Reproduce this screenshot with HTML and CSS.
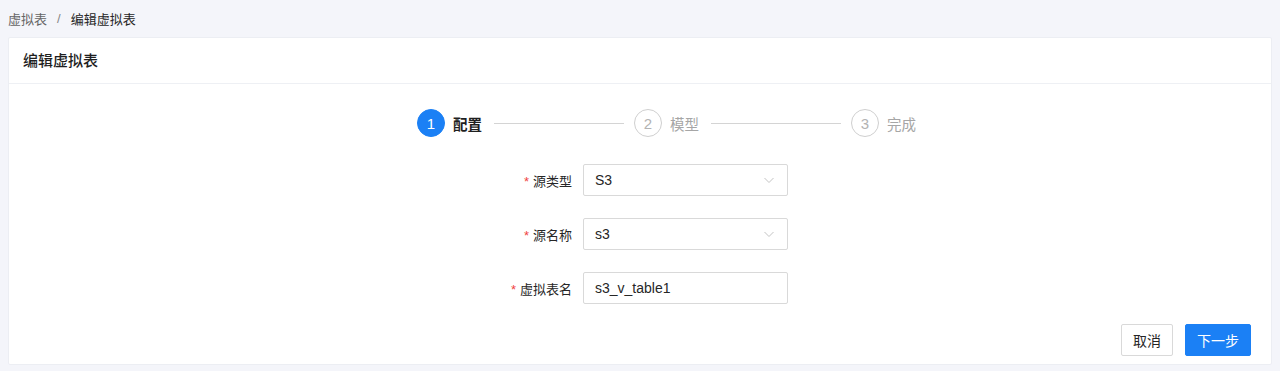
FILE: index.html
```html
<!DOCTYPE html>
<html lang="zh-CN">
<head>
  <meta charset="UTF-8">
  <title>编辑虚拟表</title>
  <link rel="stylesheet" href="styles.css">
</head>
<body>
  <div class="breadcrumb">
    <span class="crumb">虚拟表</span>
    <span class="sep">/</span>
    <span class="crumb current">编辑虚拟表</span>
  </div>

  <div class="card">
    <div class="card-header">编辑虚拟表</div>

    <div class="card-body">
      <div class="steps">
        <div class="step active">
          <span class="step-icon">1</span>
          <span class="step-title">配置</span>
          <span class="step-tail"></span>
        </div>
        <div class="step">
          <span class="step-icon">2</span>
          <span class="step-title">模型</span>
          <span class="step-tail"></span>
        </div>
        <div class="step">
          <span class="step-icon">3</span>
          <span class="step-title">完成</span>
        </div>
      </div>

      <div class="form">
        <div class="form-row">
          <label class="required">源类型</label>
          <div class="select">
            <span>S3</span>
            <svg class="arrow" viewBox="0 0 12 12"><path d="M1.5 4l4.5 4.5L10.5 4" fill="none" stroke="#c4c4c4" stroke-width="1"/></svg>
          </div>
        </div>
        <div class="form-row">
          <label class="required">源名称</label>
          <div class="select">
            <span>s3</span>
            <svg class="arrow" viewBox="0 0 12 12"><path d="M1.5 4l4.5 4.5L10.5 4" fill="none" stroke="#c4c4c4" stroke-width="1"/></svg>
          </div>
        </div>
        <div class="form-row">
          <label class="required">虚拟表名</label>
          <input class="input" type="text" value="s3_v_table1">
        </div>
      </div>

      <div class="actions">
        <button class="btn">取消</button>
        <button class="btn btn-primary">下一步</button>
      </div>
    </div>
  </div>
</body>
</html>
```

FILE: styles.css
```css
:root {
  --primary: #1b80f5;
  --text: #262626;
  --muted: #666666;
  --disabled: #b3b3b3;
  --border: #d9d9d9;
  --page-bg: #f4f5fa;
}

* {
  margin: 0;
  padding: 0;
  box-sizing: border-box;
}

body {
  font-family: "Liberation Sans", "Noto Sans CJK SC", sans-serif;
  font-size: 14px;
  color: var(--text);
  background-color: var(--page-bg);
  padding: 0 8px 0 8px;
}

/* 面包屑 */
.breadcrumb {
  height: 37px;
  display: flex;
  align-items: center;
  gap: 8px;
  font-size: 13px;
  color: var(--muted);
  padding-bottom: 1px;
}

.breadcrumb .current {
  color: #262626;
}

.breadcrumb .sep {
  color: #888;
  margin: 0 2px;
}

/* 卡片 */
.card {
  background: #fff;
  border: 1px solid #eceef3;
  border-radius: 2px;
  height: 328px;
  width: 1264px;
}

.card-header {
  height: 46px;
  line-height: 45px;
  padding: 0 14px;
  font-size: 15px;
  font-weight: 500;
  color: #1f1f1f;
  border-bottom: 1px solid #eef0f4;
}

.card-body {
  padding-top: 25px;
}

/* 步骤条 */
.steps {
  display: flex;
  align-items: center;
  margin-left: 408px;
}

.step {
  display: flex;
  align-items: center;
}

.step-icon {
  width: 28px;
  height: 28px;
  border-radius: 50%;
  border: 1px solid #cfcfcf;
  color: var(--disabled);
  display: flex;
  align-items: center;
  justify-content: center;
  font-size: 15px;
}

.step-title {
  margin-left: 8px;
  font-size: 14.5px;
  color: #a6a6a6;
}

.step-tail {
  width: 130px;
  height: 1px;
  background: #d4d4d4;
  margin: 0 10px 0 12px;
}

.step.active .step-icon {
  background: var(--primary);
  border-color: var(--primary);
  color: #fff;
}

.step.active .step-title {
  color: #1f1f1f;
  font-weight: 600;
}

/* 表单 */
.form {
  margin-top: 27px;
  margin-left: 474px;
  display: flex;
  flex-direction: column;
  gap: 22px;
}

.form-row {
  display: flex;
  align-items: center;
}

.form-row label {
  width: 100px;
  text-align: right;
  padding-right: 11px;
  font-size: 13px;
  color: #262626;
}

.required::before {
  content: "*";
  color: #f04343;
  margin-right: 4px;
  font-family: "Liberation Sans", sans-serif;
}

.select,
.input {
  width: 205px;
  height: 32px;
  border: 1px solid var(--border);
  border-radius: 2px;
  background: #fff;
  padding: 0 11px;
  font-family: inherit;
  font-size: 14px;
  color: #262626;
}

.select {
  display: flex;
  align-items: center;
  justify-content: space-between;
}

.input {
  outline: none;
}

.arrow {
  width: 12px;
  height: 12px;
  margin-right: 1px;
}

/* 操作按钮 */
.actions {
  display: flex;
  justify-content: flex-end;
  gap: 12px;
  margin-top: 20px;
  padding-right: 20px;
}

.btn {
  height: 32px;
  padding: 0 11px;
  border: 1px solid var(--border);
  border-radius: 2px;
  background: #fff;
  font-family: inherit;
  font-size: 14px;
  color: #262626;
  cursor: pointer;
}

.btn-primary {
  background: var(--primary);
  border-color: var(--primary);
  color: #fff;
}
```
